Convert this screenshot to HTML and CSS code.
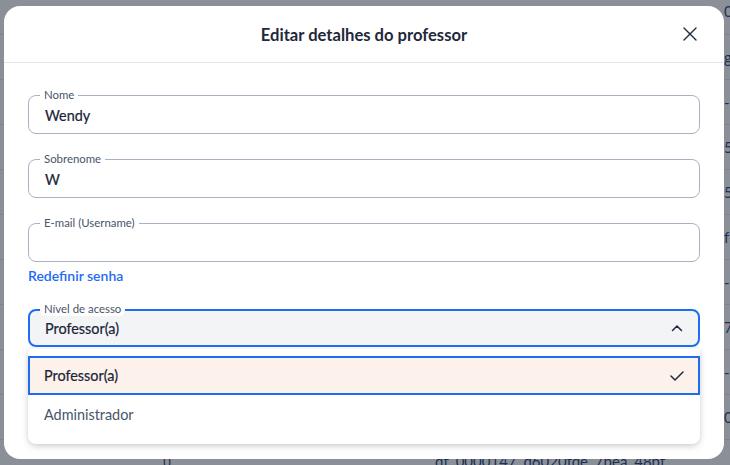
FILE: index.html
```html
<!DOCTYPE html>
<html lang="pt-BR">
<head>
    <meta charset="UTF-8">
    <meta name="viewport" content="width=device-width, initial-scale=1.0">
    <title>Editar detalhes do professor</title>
    <link rel="stylesheet" href="styles.css">
</head>
<body>
    <div class="backdrop">
        <div class="row"><span>08</span></div>
        <div class="row"><span>g</span></div>
        <div class="row"><span>-</span></div>
        <div class="row"><span>5-</span></div>
        <div class="row"><span>5-</span></div>
        <div class="row"><span>f-</span></div>
        <div class="row"><span>-8</span></div>
        <div class="row"><span>7-</span></div>
        <div class="row"><span>-2</span></div>
        <div class="row"><span>0-</span></div>
        <div class="bottom-text"><span class="paren">()</span><span class="id">dt_0000147_d6020fde_7bea_48bf</span></div>
    </div>

    <div class="modal">
        <div class="modal-header">
            <div class="modal-title">Editar detalhes do professor</div>
            <button class="close-btn" aria-label="Fechar">
                <svg width="14" height="14" viewBox="0 0 14 14"><path d="M1 1L13 13M13 1L1 13" stroke="#1e293b" stroke-width="1.4" stroke-linecap="round"/></svg>
            </button>
        </div>
        <div class="modal-body">
            <div class="field">
                <span class="field-label">Nome</span>
                <div class="field-value">Wendy</div>
            </div>
            <div class="field">
                <span class="field-label">Sobrenome</span>
                <div class="field-value">W</div>
            </div>
            <div class="field field-email">
                <span class="field-label">E-mail (Username)</span>
                <div class="field-value"></div>
            </div>
            <a class="link" href="#">Redefinir senha</a>

            <div class="select-wrap">
                <div class="field field-select">
                    <span class="field-label">Nível de acesso</span>
                    <div class="field-value">Professor(a)</div>
                    <svg class="chevron" width="12" height="8" viewBox="0 0 12 8"><path d="M1.5 6.5L6 2L10.5 6.5" fill="none" stroke="#1e293b" stroke-width="1.5" stroke-linecap="round" stroke-linejoin="round"/></svg>
                </div>
                <div class="dropdown">
                    <div class="option option-selected">
                        <span>Professor(a)</span>
                        <svg width="14" height="10" viewBox="0 0 14 10"><path d="M1 5L5 9L13 1" fill="none" stroke="#1e293b" stroke-width="1.5" stroke-linecap="round" stroke-linejoin="round"/></svg>
                    </div>
                    <div class="option">
                        <span>Administrador</span>
                    </div>
                </div>
            </div>
        </div>
    </div>
</body>
</html>
```

FILE: styles.css
```css
body {
    font-family: Lato, "Open Sans", sans-serif;
    background-color: #8b8f97;
    margin: 0;
    padding: 0;
    width: 730px;
    height: 465px;
    overflow: hidden;
    position: relative;
}
.row {
    height: 44px;
    border-bottom: 1px solid #7f838b;
    display: flex;
    align-items: center;
    padding-left: 724px;
    font-size: 15px;
    color: #1d2f55;
    white-space: nowrap;
}
.row:first-child {
    height: 34px;
    align-items: flex-start;
}
.row:first-child span {
    margin-top: 2px;
}
.bottom-text {
    position: absolute;
    left: 0;
    top: 452px;
    width: 100%;
    font-size: 15px;
    color: #1d2f55;
    white-space: nowrap;
}
.bottom-text .paren {
    position: absolute;
    left: 163px;
}
.bottom-text .id {
    position: absolute;
    left: 435px;
}
.modal {
    position: absolute;
    left: 4px;
    top: 6px;
    width: 720px;
    height: 453px;
    background-color: #fff;
    border-radius: 16px;
    overflow: hidden;
}
.modal-header {
    height: 56px;
    border-bottom: 1px solid #e2e5ec;
    display: flex;
    align-items: center;
    justify-content: center;
    position: relative;
}
.modal-title {
    font-size: 16.6px;
    font-weight: bold;
    color: #1e293b;
    padding-top: 1px;
}
.close-btn {
    position: absolute;
    right: 27px;
    top: 21px;
    width: 14px;
    height: 14px;
    padding: 0;
    border: 0;
    background: none;
    display: flex;
}
.modal-body {
    padding: 32px 24px 0 24px;
}
.field {
    position: relative;
    height: 37px;
    border: 1px solid #aab1c0;
    border-radius: 8px;
    display: flex;
    align-items: center;
    padding: 0 16px;
    margin-bottom: 25px;
}
.field-label {
    position: absolute;
    left: 11px;
    top: -8px;
    padding: 0 4px;
    background-color: #fff;
    font-size: 11.4px;
    line-height: 14px;
    color: #475569;
    border-radius: 6px;
}
.field-value {
    font-size: 14.4px;
    font-weight: 400;
    color: #1a2436;
    padding-top: 1px;
    -webkit-text-stroke: 0.2px #1a2436;
}
.field-email {
    margin-bottom: 5px;
}
.link {
    display: block;
    font-size: 14px;
    font-weight: 600;
    color: #1d6cf2;
    text-decoration: none;
    margin-bottom: 25px;
}
.field-select {
    border: 2px solid #1d6cf2;
    height: 34px;
    background-color: #f3f4f6;
    margin-bottom: 0;
    justify-content: space-between;
    padding: 0 15px;
}
.field-select .field-label {
    left: 10px;
    top: -9px;
}
.field-select .field-value {
    padding-top: 1px;
}
.dropdown {
    margin-top: 2px;
    background-color: #fff;
    border-radius: 0 0 8px 8px;
    box-shadow: 0 2px 6px rgba(15, 23, 42, 0.22);
    padding: 7px 0 10px 0;
}
.option {
    height: 39px;
    display: flex;
    align-items: center;
    justify-content: space-between;
    padding: 0 16px;
    font-size: 14.4px;
    color: #475569;
    box-sizing: border-box;
}
.option-selected {
    border: 2px solid #1d6cf2;
    background-color: #fdf1ec;
    color: #1a2436;
    -webkit-text-stroke: 0.2px #1a2436;
    padding: 0 14px;
}
```
